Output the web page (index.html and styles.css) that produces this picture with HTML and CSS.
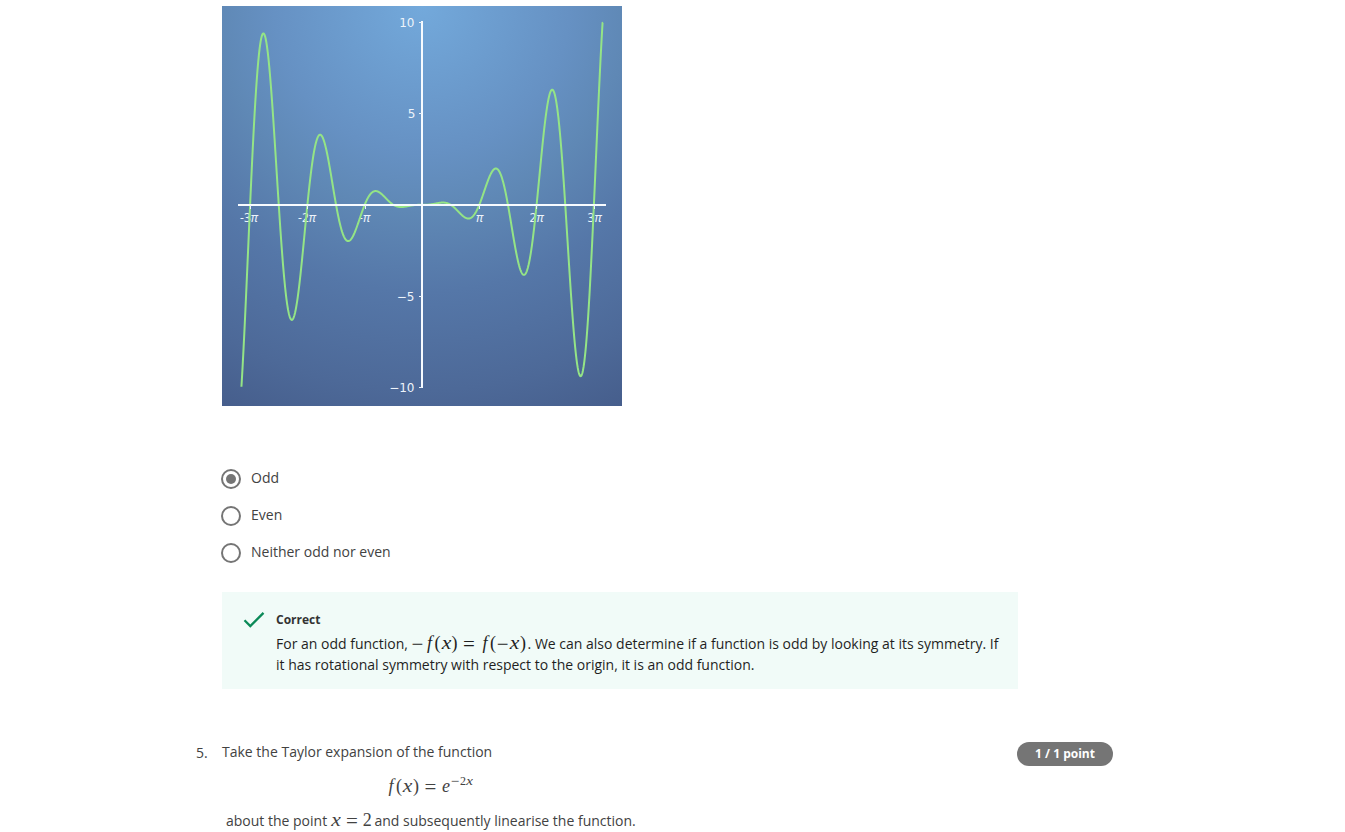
FILE: index.html
```
<!DOCTYPE html>
<html lang="en">
<head>
<meta charset="utf-8">
<title>Quiz</title>
<link rel="stylesheet" href="styles.css">
</head>
<body>
<main class="quiz">
  <svg class="plot" width="400" height="400" viewBox="0 0 400 400">
    <defs>
      <radialGradient id="sky" gradientUnits="userSpaceOnUse" cx="200" cy="0" r="447">
        <stop offset="0" stop-color="#73a9db"/>
        <stop offset="0.33" stop-color="#6691c3"/>
        <stop offset="0.46" stop-color="#5f88b5"/>
        <stop offset="0.64" stop-color="#5577a8"/>
        <stop offset="0.86" stop-color="#4d6998"/>
        <stop offset="1" stop-color="#465e8c"/>
      </radialGradient>
    </defs>
    <rect width="400" height="400" fill="url(#sky)"/>
    <g class="labels y-labels">
      <text x="192.500" y="21" text-anchor="end">10</text>
      <text x="193.500" y="112" text-anchor="end">5</text>
      <text x="192.500" y="295" text-anchor="end">−5</text>
      <text x="192.500" y="386" text-anchor="end">−10</text>
    </g>
    <g class="labels x-labels">
      <text x="27" y="216" text-anchor="middle">-3<tspan class="pi">π</tspan></text>
      <text x="85" y="216" text-anchor="middle">-2<tspan class="pi">π</tspan></text>
      <text x="142.500" y="216" text-anchor="middle">-<tspan class="pi">π</tspan></text>
      <text x="257.500" y="216" text-anchor="middle"><tspan class="pi">π</tspan></text>
      <text x="314.500" y="216" text-anchor="middle">2<tspan class="pi">π</tspan></text>
      <text x="372.500" y="216" text-anchor="middle">3<tspan class="pi">π</tspan></text>
    </g>
    <path class="curve" id="curve"/>
    <path class="axes" d="M16 199H384M200 15V382"/>
    <path class="ticks" d="M197 16.500h3M197 107.500h3M197 290.500h3M197 381.500h3M28.500 199v4M85.500 199v4M143.500 199v4M257.500 199v4M314.500 199v4M372.500 199v4"/>
  </svg>

  <div class="options">
    <label class="option"><span class="radio checked"></span>Odd</label>
    <label class="option"><span class="radio"></span>Even</label>
    <label class="option"><span class="radio"></span>Neither odd nor even</label>
  </div>

  <section class="feedback">
    <svg class="check" width="22" height="18" viewBox="0 0 22 18"><path d="M1.500 9.300L7.300 15.100L20.500 1.900" fill="none" stroke="#0b8a58" stroke-width="2.300"/></svg>
    <div class="feedback-body">
      <h3>Correct</h3>
      <p>For an odd function, <span class="math math-odd"><b class="op minus">−</b><i class="f">f</i><b class="par">(</b><i class="x">x</i><b class="par">)</b><b class="op eq">=</b><i class="f">f</i><b class="par">(</b><b class="op neg">−</b><i class="x">x</i><b class="par">)</b></span>. We can also determine if a function is odd by looking at its symmetry. If<br>it has rotational symmetry with respect to the origin, it is an odd function.</p>
    </div>
  </section>

  <section class="question">
    <span class="number">5.</span>
    <div class="prompt">
      <p>Take the Taylor expansion of the function</p>
      <div class="display math"><i class="f">f</i><b class="par">(</b><i class="x">x</i><b class="par">)</b><b class="op eq">=</b><i class="e">e</i><span class="sup"><b class="sup-minus">−</b><b class="sup-two">2</b><i class="sup-x">x</i></span></div>
      <p class="about">about the point <span class="math math-point"><i class="x">x</i><b class="op eq">=</b><b class="two">2</b></span> and subsequently linearise the function.</p>
    </div>
    <span class="points">1 / 1 point</span>
  </section>
</main>
<script src="plot.js"></script>
</body>
</html>
```
FILE: styles.css
```
* { box-sizing: border-box; }
html, body { height: 100%; }
body {
  margin: 0;
  overflow: hidden;
  background: #fff;
  color: #424242;
  font: 14px/21px "Open Sans", "Noto Sans", sans-serif;
}
p, h3 { margin: 0; }
.quiz { width: 917px; margin-left: 196px; padding-top: 6px; }
.plot { display: block; margin-left: 26px; }
.labels { fill: #edf4fb; font-size: 12px; }
.y-labels { font-family: "DejaVu Sans", sans-serif; }
.x-labels { font-family: "Noto Sans", "Open Sans", sans-serif; }
.pi { font-style: italic; }
.curve { fill: none; stroke: #94e486; stroke-width: 2; stroke-linejoin: round; }
.axes { fill: none; stroke: #f7fbff; stroke-width: 2; }
.ticks { fill: none; stroke: #e8f1fa; stroke-width: 1; }

.options { display: grid; gap: 16px; margin: 61px 0 0 25px; }
.option { display: flex; align-items: flex-start; gap: 10px; height: 21px; }
.radio {
  display: flex;
  align-items: center;
  justify-content: center;
  width: 20px;
  height: 20px;
  margin-top: 2px;
  border: 2px solid #757575;
  border-radius: 50%;
}
.radio.checked::after { content: ""; width: 10px; height: 10px; border-radius: 50%; background: #757575; }

.feedback {
  display: flex;
  gap: 11px;
  width: 796px;
  height: 97px;
  margin: 30px 0 0 26px;
  padding: 18px 0 0 21px;
  background: #f1fbf8;
  color: #1f1f1f;
}
.check { flex: none; margin-top: 1px; }
.feedback-body { white-space: nowrap; }
.feedback h3 { color: #333; font-size: 12px; line-height: 19px; font-weight: 700; margin-bottom: 4px; }

.question { display: flex; align-items: flex-start; margin-top: 52px; }
.number { width: 26px; padding-top: 1px; }
.prompt { width: 795px; white-space: nowrap; }
.display { display: flex; align-items: baseline; height: 24px; margin: 14px 0 0 164px; }
.about { margin: 10px 0 0 4px; }
.points {
  width: 96px;
  height: 24px;
  margin-top: 1px;
  border-radius: 12px;
  background: #757575;
  color: #fff;
  font-size: 12px;
  font-weight: 700;
  line-height: 24px;
  text-align: center;
}

.math { font-family: "Liberation Serif", serif; font-size: 18px; line-height: 18px; }
.math b, .math i { display: inline-block; font-weight: 400; text-align: center; }
.math .f { width: 10px; }
.math .par { width: 6px; }
.math .x { width: 11px; transform: scaleX(1.2); }
.math .op { width: 14px; font-size: 21px; transform: translateY(2px); }
.math .minus { width: 13px; text-align: left; }
.math-odd { margin-right: 1.500px; }
.math .neg { width: 13px; }
.math .eq { width: 23px; }
.math-odd .eq { width: 22.500px; }
.math .e { width: 8px; }
.math-point .x { width: 10px; }
.math-point .eq { width: 22px; }
.math .two { width: 9px; }
.math-point { margin-right: -1px; }
.sup { display: inline-flex; align-items: baseline; font-size: 12px; transform: translateY(-7px); }
.math .sup-minus { width: 10px; font-size: 15px; transform: translateY(1px); }
.math .sup-two { width: 6px; }
.math .sup-x { width: 7px; transform: scaleX(1.25); }
```
FILE: plot.js
```
// Samples f(x) = x² sin(2x) / 8 over the visible domain.
const points = [];
for (let x = -9.9; x <= 9.905; x += 0.02) {
  const y = x * x * Math.sin(2 * x) / 8;
  points.push((200 + x * 57.3 / Math.PI).toFixed(2) + " " + (198.8 - y * 18.25).toFixed(2));
}
points.push("381.1 16.5");
document.getElementById("curve").setAttribute("d", "M" + points.join("L"));
```
